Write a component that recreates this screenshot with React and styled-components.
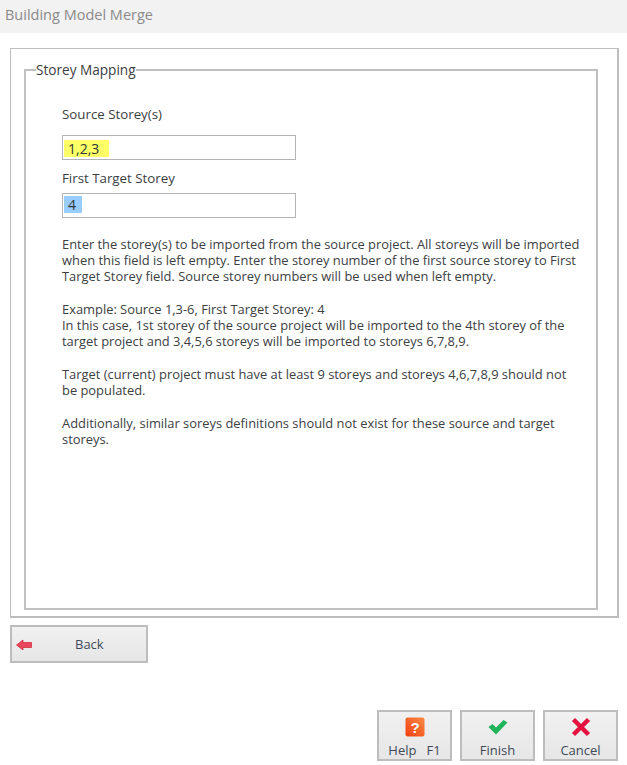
import styled, { createGlobalStyle } from 'styled-components';

const GlobalStyle = createGlobalStyle`
    html, body {
        margin: 0;
        padding: 0;
        background: #fff;
    }
    body {
        font-family: "Open Sans", "Liberation Sans", sans-serif;
        color: #3c4043;
    }
`;

const Window = styled.div`
    width: 627px;
    height: 765px;
    overflow: hidden;
    display: flex;
    flex-direction: column;
`;

const TitleBar = styled.div`
    height: 33px;
    flex: none;
    background: #f2f2f2;
    color: #8a8a8a;
    font-size: 14.5px;
    line-height: 29px;
    padding-left: 5px;
`;

const Panel = styled.div`
    box-sizing: border-box;
    height: 570px;
    margin: 15px 8px 0 10px;
    border: 1px solid #bdbdbd;
    border-width: 1px 2px 2px 1px;
    padding: 13px 19px 6px 13px;
`;

const Group = styled.fieldset`
    box-sizing: border-box;
    height: 100%;
    margin: 0;
    border: 2px solid #c0c0c0;
    padding: 0 0 0 36px;
    min-width: 0;
`;

const GroupTitle = styled.legend`
    padding: 0;
    margin-left: -26px;
    font-size: 13.6px;
    line-height: 16px;
`;

const FieldLabel = styled.div`
    font-size: 13.3px;
    line-height: 16px;
    margin-top: ${(p) => p.$top}px;
`;

const Field = styled.div`
    box-sizing: border-box;
    width: 234px;
    height: 25px;
    margin-top: ${(p) => p.$top}px;
    border: 1px solid #b4b4b4;
    padding: ${(p) => p.$inset}px 1px 0;
    display: flex;
    align-items: flex-start;
`;

const FieldValue = styled.span`
    background: ${(p) => p.$bg};
    font-size: 14px;
    line-height: 17px;
    padding: 0 ${(p) => p.$pad}px 0 4px;
    color: #33373a;
`;

const Help = styled.div`
    margin-top: 18px;
    width: 521px;
    font-size: 12.9px;
    line-height: 16px;
    p {
        margin: 0 0 17px;
    }
`;

const BackRow = styled.div`
    margin: 7px 0 0 10px;
`;

const Button = styled.div`
    box-sizing: border-box;
    border: 2px solid #bdbdbd;
    background: linear-gradient(#f1f1f1, #e6e6e6);
    color: #3f4a58;
    font-size: 13px;
`;

const BackButton = styled(Button)`
    width: 138px;
    height: 38px;
    display: flex;
    align-items: center;
    padding-left: 4px;
    svg {
        flex: none;
    }
    span {
        margin-left: 43px;
    }
`;

const Footer = styled.div`
    display: flex;
    justify-content: flex-end;
    gap: 8px;
    margin: 47px 9px 0 0;
`;

const ActionButton = styled(Button)`
    width: 75px;
    height: 51px;
    display: flex;
    flex-direction: column;
    align-items: center;
    line-height: 16px;
`;

const IconSlot = styled.div`
    height: 21px;
    margin-top: 4px;
    margin-bottom: 5px;
    display: flex;
    align-items: center;
    justify-content: center;
    flex: none;
`;

function BackIcon() {
    return (
        <svg width="16" height="12" viewBox="0 0 16 12">
            <path d="M0.5 7 L7 2 V4.5 H15.5 V9.5 H7 V12 Z" fill="#e8475c" stroke="#d0202f" strokeWidth="0.7" />
        </svg>
    );
}

function HelpIcon() {
    return (
        <svg width="20" height="20" viewBox="0 0 20 20">
            <defs>
                <linearGradient id="helpFill" x1="0" y1="1" x2="1" y2="0">
                    <stop offset="0" stopColor="#f2400f" />
                    <stop offset="1" stopColor="#f98a45" />
                </linearGradient>
            </defs>
            <rect x="0.5" y="0.5" width="19" height="19" rx="2" fill="url(#helpFill)" />
            <text x="10" y="15.5" textAnchor="middle" fontSize="15" fontWeight="700" fontFamily="Liberation Sans, sans-serif" fill="#fff">?</text>
        </svg>
    );
}

function CheckIcon() {
    return (
        <svg width="20" height="16" viewBox="0 0 20 16">
            <path d="M0.5 8 L4.5 5 L8 8.5 L15.5 1 L19.5 3.5 L8 15.5 Z" fill="#1fb45a" />
        </svg>
    );
}

function CloseIcon() {
    return (
        <svg width="20" height="20" viewBox="0 0 20 20">
            <path d="M2.5 2.5 L17.5 17.5 M17.5 2.5 L2.5 17.5" stroke="#e4123f" strokeWidth="4.5" />
        </svg>
    );
}

export default function App() {
    return (
        <Window>
            <GlobalStyle />
            <TitleBar>Building Model Merge</TitleBar>
            <Panel>
                <Group>
                    <GroupTitle>Storey Mapping</GroupTitle>
                    <FieldLabel $top={28}>Source Storey(s)</FieldLabel>
                    <Field $top={13} $inset={4}>
                        <FieldValue $bg="#ffff66" $pad={10}>1,2,3</FieldValue>
                    </Field>
                    <FieldLabel $top={10}>First Target Storey</FieldLabel>
                    <Field $top={7} $inset={2}>
                        <FieldValue $bg="#99ccff" $pad={6}>4</FieldValue>
                    </Field>
                    <Help>
                        <p>
                            Enter the storey(s) to be imported from the source project. All storeys will be imported
                            when this field is left empty. Enter the storey number of the first source storey to First
                            Target Storey field. Source storey numbers will be used when left empty.
                        </p>
                        <p>
                            Example: Source 1,3-6, First Target Storey: 4<br />
                            In this case, 1st storey of the source project will be imported to the 4th storey of the
                            target project and 3,4,5,6 storeys will be imported to storeys 6,7,8,9.
                        </p>
                        <p>
                            Target (current) project must have at least 9 storeys and storeys 4,6,7,8,9 should not be
                            populated.
                        </p>
                        <p>
                            Additionally, similar soreys definitions should not exist for these source and target
                            storeys.
                        </p>
                    </Help>
                </Group>
            </Panel>
            <BackRow>
                <BackButton>
                    <BackIcon />
                    <span>Back</span>
                </BackButton>
            </BackRow>
            <Footer>
                <ActionButton><IconSlot><HelpIcon /></IconSlot>Help&nbsp;&nbsp;&nbsp;F1</ActionButton>
                <ActionButton><IconSlot><CheckIcon /></IconSlot>Finish</ActionButton>
                <ActionButton><IconSlot><CloseIcon /></IconSlot>Cancel</ActionButton>
            </Footer>
        </Window>
    );
}
